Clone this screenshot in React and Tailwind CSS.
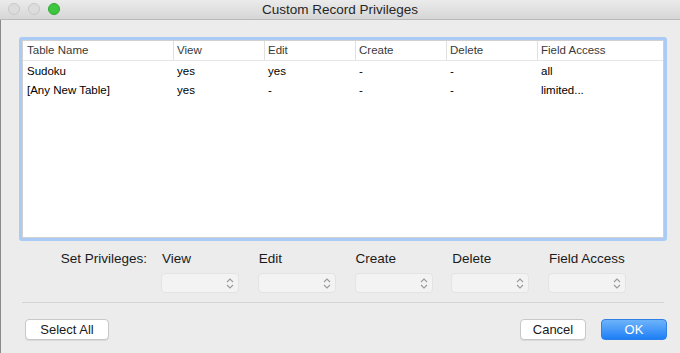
const COLS = [
  { label: "Table Name", w: "w-[150px]" },
  { label: "View", w: "w-[91px]" },
  { label: "Edit", w: "w-[91px]" },
  { label: "Create", w: "w-[91px]" },
  { label: "Delete", w: "w-[91px]" },
  { label: "Field Access", w: "flex-1" },
];

const ROWS = [
  ["Sudoku", "yes", "yes", "-", "-", "all"],
  ["[Any New Table]", "yes", "-", "-", "-", "limited..."],
];

const PRIVS = ["View", "Edit", "Create", "Delete", "Field Access"];

function Stepper() {
  return (
    <svg width="8" height="13" viewBox="0 0 8 13" className="text-[#9a9a9a]">
      <path d="M1 5 L4 2 L7 5" fill="none" stroke="currentColor" strokeWidth="1.1" />
      <path d="M1 8 L4 11 L7 8" fill="none" stroke="currentColor" strokeWidth="1.1" />
    </svg>
  );
}

export default function App() {
  return (
    <div className="w-[680px] h-[353px] bg-[#ececec] flex flex-col overflow-hidden font-['Helvetica_Neue','Liberation_Sans',Arial,sans-serif] text-[#1a1a1a]">
      {/* title bar */}
      <div className="relative h-[20px] shrink-0 bg-gradient-to-b from-[#ebebeb] to-[#d6d6d6] border-b border-[#b9b9b9] flex items-center justify-center">
        <div className="absolute left-[8px] top-[3px] flex gap-[8px]">
          <span className="w-[12px] h-[12px] rounded-full bg-[#dcdcdc] border border-[#c8c8c8]" />
          <span className="w-[12px] h-[12px] rounded-full bg-[#dcdcdc] border border-[#c8c8c8]" />
          <span className="w-[12px] h-[12px] rounded-full bg-[#3ec63f] border border-[#30a933]" />
        </div>
        <span className="text-[13.5px] text-[#262626] leading-none">Custom Record Privileges</span>
      </div>

      <div className="flex-1 border-l border-[#8a8a8a] pl-[18px] pr-[13px] pt-[17px]">
        {/* table */}
        <div className="h-[204px] rounded-[3px] border-[3px] border-[#a9cbf5] bg-white">
          <div className="h-full border border-[#d0d0d0] flex flex-col">
            <div className="h-[20px] flex border-b border-[#e6e6e6] text-[11.5px] text-[#3a3a3a]">
              {COLS.map((c, i) => (
                <div
                  key={c.label}
                  className={`${c.w} flex items-center pl-[3px] ${i > 0 ? "border-l border-[#e0e0e0]" : "pl-[4px]"}`}
                >
                  {c.label}
                </div>
              ))}
            </div>
            <div className="pt-[1px]">
              {ROWS.map((r) => (
                <div key={r[0]} className="h-[19px] flex text-[11.5px] text-black">
                  {r.map((cell, i) => (
                    <div key={i} className={`${COLS[i].w} flex items-center pl-[4px]`}>
                      {cell}
                    </div>
                  ))}
                </div>
              ))}
            </div>
          </div>
        </div>

        {/* set privileges */}
        <div className="flex mt-[10px]">
          <div className="w-[142px] shrink-0 text-right pr-[14px] text-[13.5px] leading-[16px]">Set Privileges:</div>
          <div className="flex gap-[18.75px]">
            {PRIVS.map((p) => (
              <div key={p} className="w-[78px] flex flex-col">
                <span className="text-[13.5px] leading-[16px] pl-[1px] whitespace-nowrap">{p}</span>
                <div className="mt-[6px] h-[20px] rounded-[4px] bg-[#f3f3f3] border border-[#e3e3e3] flex items-center justify-end pr-[4px]">
                  <Stepper />
                </div>
              </div>
            ))}
          </div>
        </div>

        <div className="mt-[9px] h-px bg-[#d4d4d4] mx-[3px]" />

        {/* buttons */}
        <div className="flex items-center mt-[16px] text-[13px]">
          <button className="ml-[6px] w-[84px] h-[21px] rounded-[4px] bg-white border border-[#c8c8c8] shadow-[0_1px_0_rgba(0,0,0,0.08)]">
            Select All
          </button>
          <div className="flex-1" />
          <button className="w-[66px] h-[21px] rounded-[4px] bg-white border border-[#c8c8c8] shadow-[0_1px_0_rgba(0,0,0,0.08)]">
            Cancel
          </button>
          <button className="ml-[15px] w-[66px] h-[21px] rounded-[4px] bg-gradient-to-b from-[#6cb3fa] to-[#1a7ef6] border border-[#2f7fe6] text-white">
            OK
          </button>
        </div>
      </div>
    </div>
  );
}
